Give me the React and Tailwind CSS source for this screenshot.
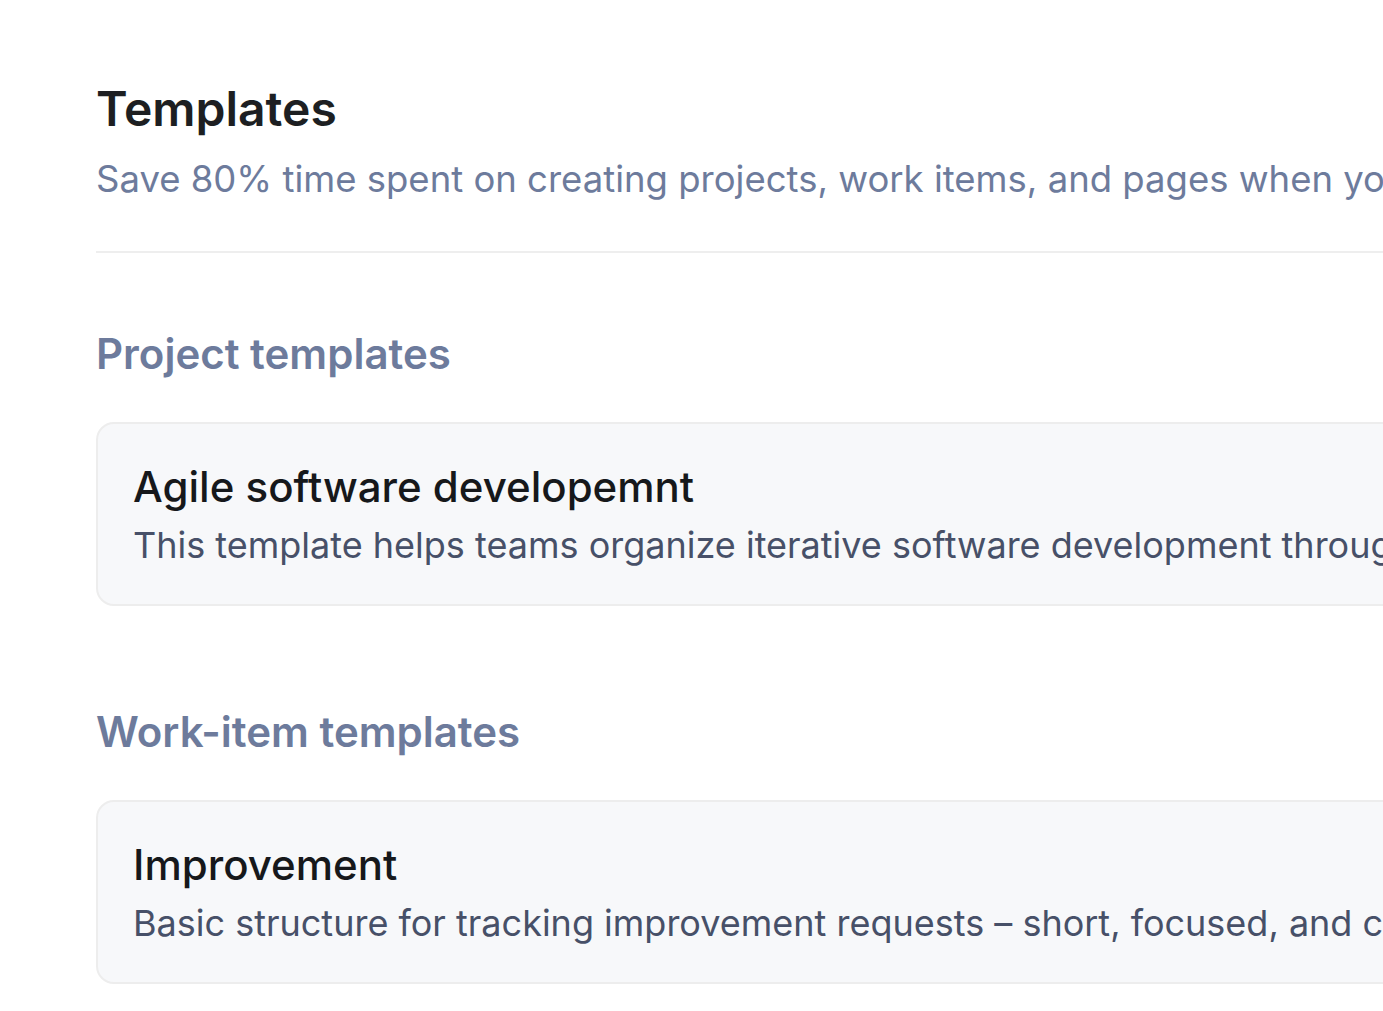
export default function App() {
  const sections = [
    {
      title: 'Project templates',
      items: [
        {
          name: 'Agile software developemnt',
          desc: 'This template helps teams organize iterative software development through sprints, backlogs and clear workflows.',
        },
      ],
    },
    {
      title: 'Work-item templates',
      items: [
        {
          name: 'Improvement',
          desc: 'Basic structure for tracking improvement requests – short, focused, and clear to act on.',
        },
      ],
    },
  ];

  return (
    <div className="min-h-screen w-full overflow-hidden bg-white" style={{ fontFamily: 'Inter, "Noto Sans", sans-serif' }}>
      <div className="w-[2200px] pl-[96px] pt-[80px]">
        {/* Header */}
        <div className="border-b-2 border-[#eeeeee] pb-[48px]">
          <h1 className="text-[48px] font-semibold leading-[58px] text-[#1d1f22]">Templates</h1>
          <p className="mt-[17px] whitespace-nowrap text-[36.5px] leading-[48px] text-[#6d7b9c]">
            Save 80% time spent on creating projects, work items, and pages when you start from a ready-made template.
          </p>
        </div>

        {sections.map((section, i) => (
          <section key={section.title} className={i === 0 ? 'mt-[75px]' : 'mt-[100px]'}>
            <h2 className="text-[42px] font-semibold leading-[52px] text-[#6d7b9c]">{section.title}</h2>
            <div className="mt-[42px] flex flex-col gap-4">
              {section.items.map((item) => (
                <div
                  key={item.name}
                  className="rounded-[18px] border-2 border-[#ededed] bg-[#f7f8fa] px-[35px] pb-[36px] pt-[37px]"
                >
                  <div className="whitespace-nowrap text-[42px] font-medium leading-[52px] text-[#16181b]">{item.name}</div>
                  <div className="mt-[9px] whitespace-nowrap text-[36px] leading-[46px] text-[#475068]">{item.desc}</div>
                </div>
              ))}
            </div>
          </section>
        ))}
      </div>
    </div>
  );
}
